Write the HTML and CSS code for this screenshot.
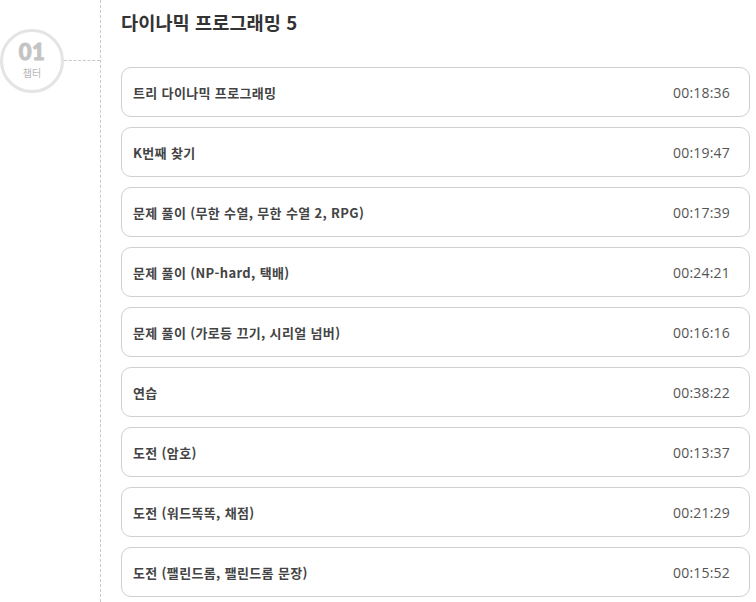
FILE: index.html
```html
<!DOCTYPE html>
<html lang="ko">
<head>
<meta charset="utf-8">
<link rel="stylesheet" href="styles.css">
</head>
<body>
<div class="chapter">
  <div class="rail">
    <div class="marker">
      <div class="circle">
        <span class="num">01</span>
        <span class="label">챕터</span>
      </div>
      <div class="connector"></div>
    </div>
  </div>
  <div class="content">
    <h1 class="title">다이나믹 프로그래밍 5</h1>
    <ul class="lessons">
      <li class="lesson"><span class="name">트리 다이나믹 프로그래밍</span><span class="time">00:18:36</span></li>
      <li class="lesson"><span class="name">K번째 찾기</span><span class="time">00:19:47</span></li>
      <li class="lesson"><span class="name">문제 풀이 (무한 수열, 무한 수열 2, RPG)</span><span class="time">00:17:39</span></li>
      <li class="lesson"><span class="name">문제 풀이 (NP-hard, 택배)</span><span class="time">00:24:21</span></li>
      <li class="lesson"><span class="name">문제 풀이 (가로등 끄기, 시리얼 넘버)</span><span class="time">00:16:16</span></li>
      <li class="lesson"><span class="name">연습</span><span class="time">00:38:22</span></li>
      <li class="lesson"><span class="name">도전 (암호)</span><span class="time">00:13:37</span></li>
      <li class="lesson"><span class="name">도전 (워드똑똑, 채점)</span><span class="time">00:21:29</span></li>
      <li class="lesson"><span class="name">도전 (팰린드롬, 팰린드롬 문장)</span><span class="time">00:15:52</span></li>
    </ul>
  </div>
</div>
</body>
</html>
```

FILE: styles.css
```css
html, body {
  margin: 0;
  padding: 0;
  background: #fff;
}
body {
  font-family: "Noto Sans CJK KR", "Noto Sans", sans-serif;
  color: #444;
  overflow: hidden;
}
.chapter {
  display: flex;
  min-height: 602px;
}
.rail {
  width: 100px;
  flex: none;
  border-right: 1px dashed #c8c8c8;
  padding-top: 29px;
  box-sizing: content-box;
}
.marker {
  display: flex;
  align-items: center;
}
.circle {
  width: 58px;
  height: 58px;
  border: 3px solid #e4e4e4;
  border-radius: 50%;
  display: flex;
  flex-direction: column;
  align-items: center;
  justify-content: center;
  flex: none;
  box-sizing: content-box;
}
.num {
  font-family: Lato, "Open Sans", sans-serif;
  font-weight: 900;
  font-size: 22px;
  line-height: 22px;
  color: #c4c4c4;
  -webkit-text-stroke: 0.9px #c4c4c4;
  letter-spacing: 0.5px;
  margin-top: -3px;
}
.label {
  font-size: 10px;
  line-height: 12px;
  color: #b8b8b8;
  margin-top: 4px;
}
.connector {
  flex: 1;
  border-top: 1px dashed #c8c8c8;
  margin-top: -2px;
}
.content {
  flex: 1;
  padding: 0 6px 0 20px;
}
.title {
  margin: 9px 0 0;
  font-size: 18.7px;
  line-height: 26px;
  font-weight: 700;
  color: #333;
}
.lessons {
  list-style: none;
  margin: 32px 0 0;
  padding: 0;
  display: flex;
  flex-direction: column;
  gap: 10px;
}
.lesson {
  height: 48px;
  border: 1px solid #cfcfcf;
  border-radius: 10px;
  display: flex;
  align-items: center;
  justify-content: space-between;
  padding: 0 19px 0 11px;
}
.name {
  font-size: 13px;
  letter-spacing: 0.35px;
  font-weight: 700;
  color: #444;
}
.time {
  font-family: "Open Sans", "Noto Sans", sans-serif;
  font-size: 14px;
  letter-spacing: 0.2px;
  color: #555;
}
```
